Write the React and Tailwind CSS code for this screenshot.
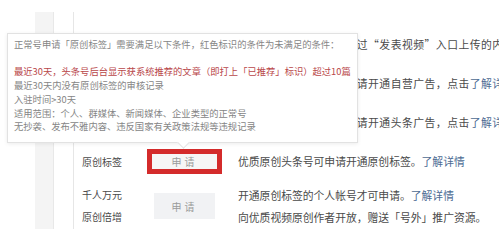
const rows = [
  { label: '视频原创', pre: '仅限原创视频内容，需通', text: '过“发表视频”入口上传的内容' },
  { label: '自营广告', pre: '可投放自营广告，如需申', text: '请开通自营广告，点击', link: '了解详情' },
  { label: '头条广告', pre: '可投放头条广告，如需申', text: '请开通头条广告，点击', link: '了解详情' },
];

function Btn() {
  return (
    <div className="w-[61px] h-[22px] bg-[#f1f2f4] text-[#9a9a9a] text-[10px] flex items-center justify-center tracking-[3px]">
      申请
    </div>
  );
}

export default function App() {
  return (
    <div className="relative w-[499px] h-[229px] overflow-hidden bg-white font-['Noto_Sans_CJK_SC',sans-serif] text-[#4a4a4a]">
      <div className="flex h-full pt-[12px]">
        <div className="w-[35px]" />
        <div className="w-[19px] bg-[#f4f4f4] border-r border-[#e8e8e8]" />
        <div className="w-[19px]" />
        <div className="flex-1 min-w-0 border-l border-[#e6e6e6] pl-[8px] pt-[13px]">
          {rows.map((r) => (
            <div key={r.label} className="flex items-center h-[39px]">
              <div className="w-[65px] text-[10px]">{r.label}</div>
              <div className="w-[75px] flex justify-center">
                <Btn />
              </div>
              <div className="ml-[16px] flex-1 min-w-0 overflow-hidden whitespace-nowrap text-[10.8px]">
                {r.pre}
                <span className="tracking-[0.5px]">
                  {r.text}
                  {r.link && <span className="text-[#4d6b93]">{r.link}</span>}
                </span>
              </div>
            </div>
          ))}

          <div className="flex items-center h-[39px]">
            <div className="w-[65px] text-[10px]">原创标签</div>
            <div className="w-[75px] h-[25px] border-[5px] border-[#d42b2b] bg-[#f6f6f6] text-[#9a9a9a] text-[10px] flex items-center justify-center tracking-[3px]">
              申请
            </div>
            <div className="ml-[16px] flex-1 min-w-0 overflow-hidden whitespace-nowrap text-[10.8px]">
              优质原创头条号可申请开通原创标签。<span className="text-[#4d6b93]">了解详情</span>
            </div>
          </div>

          <div className="flex items-center pt-[3px]">
            <div className="w-[65px] text-[10px] leading-[22px]">
              <div>千人万元</div>
              <div>原创倍增</div>
            </div>
            <div className="w-[75px] flex justify-center">
              <div className="w-[61px] h-[26px] bg-[#f1f2f4] text-[#9a9a9a] text-[10px] flex items-center justify-center tracking-[3px]">
                申请
              </div>
            </div>
            <div className="ml-[16px] flex-1 min-w-0 overflow-hidden whitespace-nowrap text-[10.8px] leading-[22px]">
              <div>
                开通原创标签的个人帐号才可申请。<span className="text-[#4d6b93]">了解详情</span>
              </div>
              <div>向优质视频原创作者开放，赠送「号外」推广资源。</div>
            </div>
          </div>
        </div>
      </div>

      {/* tooltip */}
      <div className="absolute left-[7px] top-[33px] w-[351px] h-[110px] bg-white border border-[#e2e2e2] shadow-[0_1px_4px_rgba(0,0,0,0.08)] px-[6px] pt-[4px] text-[9.3px] leading-[13.7px] text-[#858585] whitespace-nowrap">
        <div>正常号申请「原创标签」需要满足以下条件，红色标识的条件为未满足的条件：</div>
        <div className="h-[13.7px]" />
        <div className="text-[#b9474a]">最近30天，头条号后台显示获系统推荐的文章（即打上「已推荐」标识）超过10篇</div>
        <div>最近30天内没有原创标签的审核记录</div>
        <div>入驻时间&gt;30天</div>
        <div>适用范围：个人、群媒体、新闻媒体、企业类型的正常号</div>
        <div>无抄袭、发布不雅内容、违反国家有关政策法规等违规记录</div>
        <div className="absolute left-[171px] -bottom-[5px] w-[9px] h-[9px] rotate-45 bg-white border-r border-b border-[#e2e2e2]" />
      </div>
    </div>
  );
}
